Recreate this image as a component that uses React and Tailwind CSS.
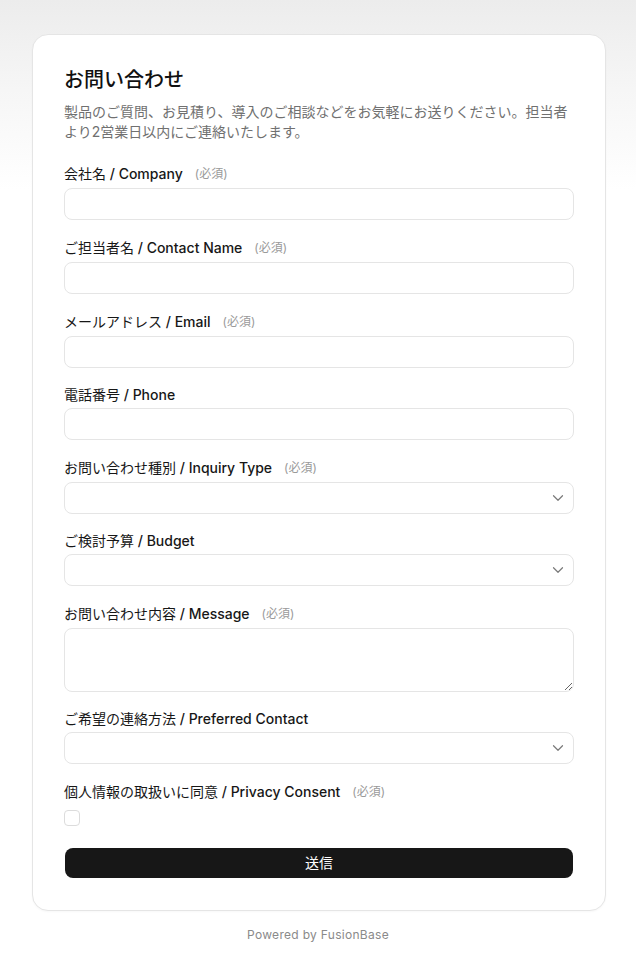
import { ChevronDown } from 'lucide-react';

const fields = [
    { ja: '会社名', en: 'Company', required: true, type: 'input' },
    { ja: 'ご担当者名', en: 'Contact Name', required: true, type: 'input' },
    { ja: 'メールアドレス', en: 'Email', required: true, type: 'input' },
    { ja: '電話番号', en: 'Phone', required: false, type: 'input' },
    { ja: 'お問い合わせ種別', en: 'Inquiry Type', required: true, type: 'select' },
    { ja: 'ご検討予算', en: 'Budget', required: false, type: 'select' },
    { ja: 'お問い合わせ内容', en: 'Message', required: true, type: 'textarea' },
    { ja: 'ご希望の連絡方法', en: 'Preferred Contact', required: false, type: 'select' },
    { ja: '個人情報の取扱いに同意', en: 'Privacy Consent', required: true, type: 'checkbox' },
];

const Field = ({ ja, en, required, type }) => {
    return (
        <div className="flex flex-col">
            {/* Label */}
            <label className="flex items-center text-sm leading-[18px] text-[#171717]">
                <span className="font-normal">{ja}</span>
                <span className="font-medium whitespace-pre"> / {en}</span>
                {required && (
                    <span className="ml-3 text-xs leading-5 font-normal text-[#9a9a9a]">(必須)</span>
                )}
            </label>

            {type === 'input' && (
                <input
                    type="text"
                    className="mt-1 h-8 w-full rounded-lg border border-[#e5e5e5] bg-white px-3 text-sm outline-none"
                />
            )}

            {type === 'select' && (
                <div className="relative mt-1">
                    <select className="h-8 w-full appearance-none rounded-lg border border-[#e5e5e5] bg-white px-3 text-sm outline-none">
                        <option value=""></option>
                    </select>
                    <ChevronDown
                        size={18}
                        strokeWidth={1.6}
                        className="pointer-events-none absolute right-[7px] top-1/2 -translate-y-1/2 text-[#7a7a7a]"
                    />
                </div>
            )}

            {type === 'textarea' && (
                <textarea className="mt-1 block h-16 w-full rounded-lg border border-[#e5e5e5] bg-white px-3 py-2 text-sm outline-none" />
            )}

            {type === 'checkbox' && (
                <div className="mt-1 flex h-6 items-center">
                    <input
                        type="checkbox"
                        className="h-4 w-4 appearance-none rounded-[4px] border border-[#dcdcdc] bg-white"
                    />
                </div>
            )}
        </div>
    );
};

export default function App() {
    return (
        <div
            className="min-h-[972px] bg-[linear-gradient(to_bottom,#ececec_0px,#f6f6f6_90px,#ffffff_190px)] pl-8 pr-[30px] pt-[34px] pb-8"
            style={{ fontFamily: 'Inter, "Noto Sans CJK JP", "Noto Sans", sans-serif' }}
        >
            {/* Card */}
            <div className="rounded-2xl border border-[#e5e5e5] bg-white px-[31px] pt-[31px] pb-8 shadow-[0_1px_2px_rgba(0,0,0,0.03)]">
                <h1 className="text-xl leading-7 font-medium text-[#111111]">お問い合わせ</h1>
                <p className="mt-2 text-sm leading-5 text-[#707070]">
                    製品のご質問、お見積り、導入のご相談などをお気軽にお送りください。担当者より2営業日以内にご連絡いたします。
                </p>

                <form className="mt-[22px] flex flex-col gap-[18px]">
                    {fields.map((f) => (
                        <Field key={f.en} {...f} />
                    ))}

                    <button
                        type="button"
                        className="mx-px h-[30px] rounded-lg bg-[#171717] text-sm font-normal text-white"
                    >
                        送信
                    </button>
                </form>
            </div>

            {/* Footer */}
            <p className="mt-[15px] pr-[2px] text-center text-xs leading-[18px] tracking-wide text-[#8a8a8a]">
                Powered by FusionBase
            </p>
        </div>
    );
}
